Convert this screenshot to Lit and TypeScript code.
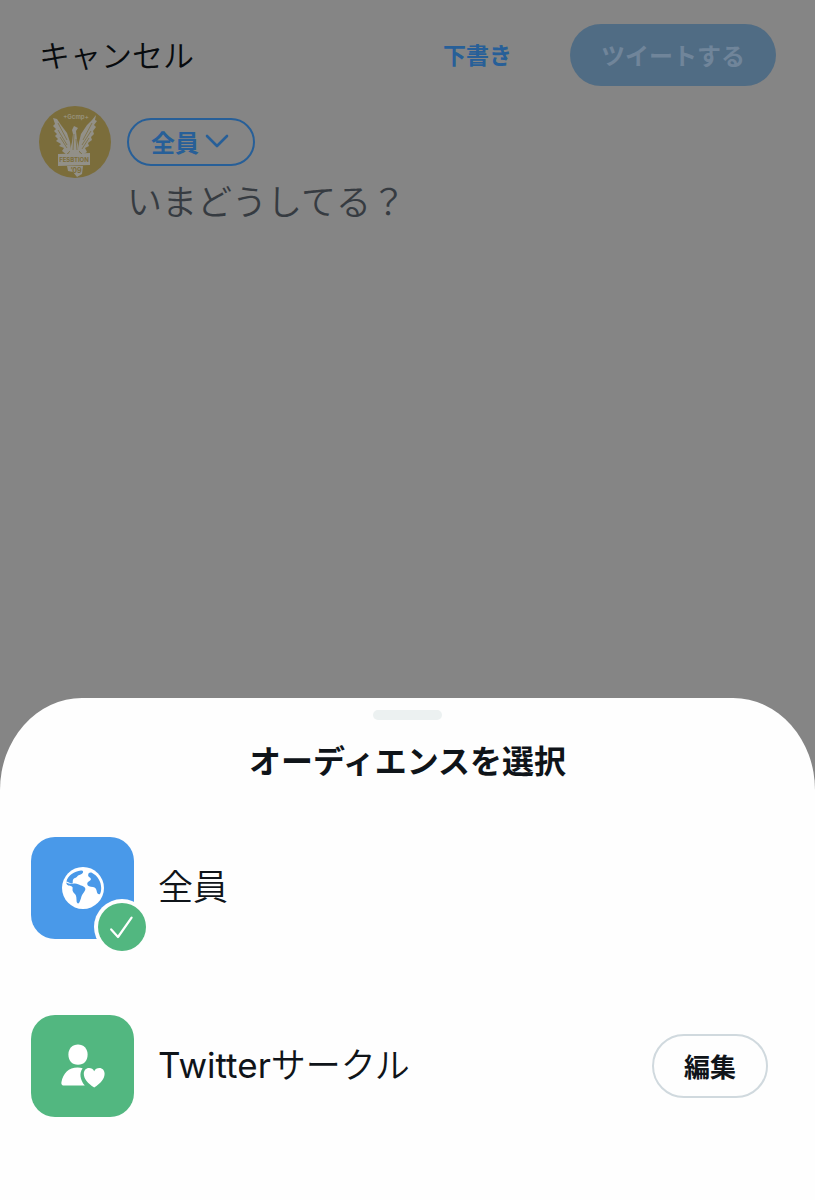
import { LitElement, html, css } from "lit";
import { customElement, state } from "lit/decorators.js";

const eagle = html`
  <svg class="avatar" viewBox="0 0 72 72" role="img" aria-label="プロフィール画像">
    <circle cx="36" cy="36" r="36" fill="#7b6d3b" />
    <text x="37" y="13" text-anchor="middle" font-size="6" font-weight="700" fill="#969079">+Gcmp+</text>
    <g fill="#929088">
      <path d="M14 12 L18 13 L22 19 L28 27 L31 36 L32 45 L28 49 L23 45 L25 42 L20 40 L22 38 L17 35 L19 33 L16 30 L18 28 L15 25 L17 23 L14 20 L16 18 Z" />
      <path d="M57 9 L56 14 L58 15 L55 19 L57 21 L54 25 L55 28 L52 31 L53 34 L49 37 L50 40 L46 42 L48 46 L43 49 L39 44 L40 36 L42 28 L48 19 L53 14 Z" />
      <path d="M33 24 L35 20 L39 22 L37 25 L38 34 L41 48 L30 48 L33 36 L34 28 Z" />
      <path d="M19 48 L51 47 L51 59 L19 60 Z" />
      <path d="M28 60 L44 60 L43 68 L38 71 L34 66 L29 65 Z" />
    </g>
    <g fill="none" stroke="#7b6d3b" stroke-width="0.7">
      <path d="M19 17 L28 34 M19 24 L28 39 M21 31 L28 42 M53 17 L44 34 M52 25 L43 39 M50 32 L43 43" />
      <path d="M35 28 L34 44 M37 33 L38 44 M31 45 L28 48 M40 45 L43 48" />
    </g>
    <g fill="#7b6d3b" text-anchor="middle" font-weight="700">
      <text x="35" y="56" font-size="6">FESBTION</text>
      <text x="37" y="67" font-size="7">’09</text>
    </g>
  </svg>
`;

const chevron = html`
  <svg class="chevron" viewBox="0 0 24 14" aria-hidden="true">
    <path d="M2 2 L12 12 L22 2" fill="none" stroke="currentColor" stroke-width="2.6" stroke-linecap="round" stroke-linejoin="round" />
  </svg>
`;

const globe = html`
  <svg class="glyph" viewBox="0 0 48 48" aria-hidden="true">
    <circle cx="24" cy="24" r="21" fill="#fff" />
    <g fill="#4999e9">
      <path d="M7.4 17.6 C9 11.6 15.2 7.4 22 6.6 C24.4 6.4 24.8 8.4 23 9.8 C21.2 11.2 19.2 10.6 18 12.8 C17 14.4 15 13.6 14 15.8 C13.4 17.4 14.2 18.6 13.4 19.4 C11.6 19.6 9.8 18.4 7.4 17.6 Z" />
      <path d="M7.2 18.6 C9.6 20 12.4 20 15 19.6 C18 19.2 19.6 20.8 22 21.4 C25 22.2 27 23.6 26.2 26 C25.4 28.4 23.4 29.6 22.6 32 C21.8 34.4 21.2 37.4 20 39 C19 40 17.8 39.2 17.6 37.6 C17.4 34.4 17.6 32 16 30 C14.4 28.4 13 26.8 13.6 24.4 C14 22.4 11.6 22 9.4 21.6 C8.2 21.2 7.4 20 7.2 18.6 Z" />
      <path d="M29.2 10.8 C29.4 8.8 31.2 8 33.2 9 C38.6 11.8 42.2 17.6 42.2 24 C42.2 26.6 41.8 28.6 41 30 C39.4 30.6 38 29.6 37.8 27.6 C37.6 25.2 36.4 23.4 34 23 C30.8 22.8 28.6 22.4 28.2 20 C28 17.8 30.2 17.4 31.6 16 C32.4 14.8 31.6 14 30.4 13.2 C29.4 12.6 29 11.8 29.2 10.8 Z" />
    </g>
  </svg>
`;

const circleFriend = html`
  <svg class="glyph" viewBox="0 0 48 48" aria-hidden="true">
    <path fill="#fff" d="M19 2.6 C24.6 2.6 28.6 6.6 28.6 12.6 C28.6 19 25 22.8 19 22.8 C13 22.8 9.4 19 9.4 12.6 C9.4 6.6 13.4 2.6 19 2.6 Z" />
    <path fill="#fff" d="M18.6 25.6 C20.4 25.6 22 25.8 23.6 26.2 C20 31 21 37.6 25.8 43.6 H5.4 C3 43.6 2 42.2 2.4 40.2 C4 31.6 9.6 25.6 18.6 25.6 Z" />
    <path fill="#fff" d="M35.2 45.4 C28.8 41.6 24.8 36.8 24.8 31.8 C24.8 28.4 27 26 30 26 C32.4 26 34.2 27.2 35.2 29.2 C36.2 27.2 38 26 40.4 26 C43.4 26 45.6 28.4 45.6 31.8 C45.6 36.8 41.6 41.6 35.2 45.4 Z" />
  </svg>
`;

const check = html`
  <svg class="badge" viewBox="0 0 56 56" aria-hidden="true">
    <circle cx="28" cy="28" r="28" fill="#fefefe" />
    <circle cx="28" cy="28" r="24" fill="#52b780" />
    <path d="M17.2 30.4 L24 38 L37.6 18.6" fill="none" stroke="#fff" stroke-width="2.2" stroke-linecap="round" stroke-linejoin="round" />
  </svg>
`;

@customElement("app-root")
export class AppRoot extends LitElement {
  @state() private audience = "everyone";

  static styles = css`
    :host {
      display: flex;
      flex-direction: column;
      min-height: 100vh;
      background: #858585;
      color: #0f1419;
      font-family: Inter, "Noto Sans CJK JP", sans-serif;
    }
    * {
      box-sizing: border-box;
    }
    button,
    textarea {
      margin: 0;
      padding: 0;
      border: 0;
      background: none;
      color: inherit;
      font: inherit;
    }
    .composer {
      flex: 1;
      padding: 24px 39px;
    }
    .bar {
      display: flex;
      align-items: center;
      height: 62px;
      margin-bottom: 20px;
    }
    .cancel {
      margin-right: auto;
      padding-bottom: 4px;
      font-size: 31px;
      font-weight: 350;
      color: #080b0e;
    }
    .drafts {
      margin-right: 58px;
      padding-bottom: 2px;
      font-size: 23px;
      font-weight: 700;
      color: #275f98;
    }
    .send {
      height: 62px;
      padding: 0 31px 2px;
      border-radius: 31px;
      background: #506c84;
      color: #70859a;
      font-size: 24px;
      font-weight: 700;
    }
    .draft {
      display: flex;
      gap: 16px;
    }
    .avatar {
      flex: none;
      width: 72px;
      height: 72px;
    }
    .entry {
      flex: 1;
      display: flex;
      flex-direction: column;
      align-items: flex-start;
      padding-top: 12px;
    }
    .scope {
      display: flex;
      align-items: center;
      gap: 6px;
      height: 48px;
      padding: 0 24px 2px 22px;
      border: 2px solid #275f98;
      border-radius: 24px;
      color: #275f98;
      font-size: 24px;
      font-weight: 700;
    }
    .chevron {
      width: 24px;
      height: 14px;
    }
    .text {
      width: 100%;
      height: 72px;
      margin-top: 10px;
      resize: none;
      outline: none;
      font-size: 35px;
      font-weight: 350;
      line-height: 52px;
    }
    .text::placeholder {
      color: #363b41;
      opacity: 1;
    }
    .sheet {
      display: flex;
      flex-direction: column;
      padding: 12px 0 83px;
      border-radius: 82px 82px 0 0 / 92px 92px 0 0;
      background: #fefefe;
    }
    .handle {
      align-self: center;
      width: 69px;
      height: 10px;
      border-radius: 5px;
      background: #ecf1f1;
    }
    .title {
      margin: 18px 0 51px;
      text-align: center;
      font-size: 32px;
      font-weight: 700;
      line-height: 48px;
    }
    .options {
      display: flex;
      flex-direction: column;
      gap: 76px;
      margin: 0;
      padding: 0 47px 0 31px;
      list-style: none;
    }
    .option {
      display: flex;
      align-items: center;
      justify-content: space-between;
    }
    .choice {
      display: flex;
      align-items: center;
      gap: 24px;
      font-size: 35px;
      font-weight: 350;
      cursor: pointer;
    }
    .name {
      padding-bottom: 8px;
    }
    .latin {
      font-weight: 400;
    }
    .tile {
      position: relative;
      display: grid;
      place-items: center;
      width: 103px;
      height: 102px;
      border-radius: 24px;
    }
    .blue {
      background: #4999e9;
    }
    .green {
      background: #52b780;
    }
    .radio {
      position: absolute;
      inset: 0;
      width: 100%;
      height: 100%;
      margin: 0;
      opacity: 0;
    }
    .glyph {
      width: 48px;
      height: 48px;
    }
    .badge {
      position: absolute;
      right: -16px;
      bottom: -16px;
      width: 56px;
      height: 56px;
    }
    .edit {
      height: 64px;
      padding: 0 30px 2px;
      border: 2px solid #d0d9de;
      border-radius: 32px;
      font-size: 26px;
      font-weight: 700;
    }
  `;

  private option(value: string, tone: string, glyph: unknown, label: unknown) {
    return html`
      <label class="choice">
        <span class="tile ${tone}">
          <input
            class="radio"
            type="radio"
            name="audience"
            .checked=${this.audience === value}
            @change=${() => (this.audience = value)}
          />
          ${glyph} ${this.audience === value ? check : ""}
        </span>
        <span class="name">${label}</span>
      </label>
    `;
  }

  render() {
    return html`
      <main class="composer">
        <header class="bar">
          <button class="cancel" type="button">キャンセル</button>
          <button class="drafts" type="button">下書き</button>
          <button class="send" type="button">ツイートする</button>
        </header>
        <div class="draft">
          ${eagle}
          <div class="entry">
            <button class="scope" type="button">全員${chevron}</button>
            <textarea class="text" aria-label="ツイート本文" placeholder="いまどうしてる？"></textarea>
          </div>
        </div>
      </main>
      <section class="sheet" aria-labelledby="title">
        <div class="handle"></div>
        <h2 class="title" id="title">オーディエンスを選択</h2>
        <ul class="options">
          <li class="option">${this.option("everyone", "blue", globe, "全員")}</li>
          <li class="option">
            ${this.option("circle", "green", circleFriend, html`<span class="latin">Twitter</span>サークル`)}
            <button class="edit" type="button">編集</button>
          </li>
        </ul>
      </section>
    `;
  }
}
